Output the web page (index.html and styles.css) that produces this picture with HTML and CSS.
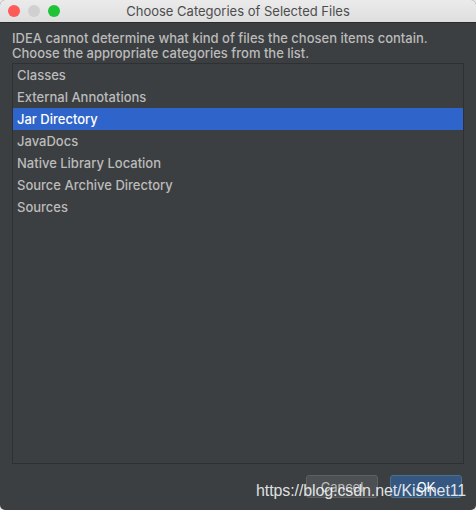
FILE: index.html
```html
<!DOCTYPE html>
<html lang="en">
<head>
  <meta charset="UTF-8" />
  <meta name="viewport" content="width=device-width, initial-scale=1.0"/>
  <title>Choose Categories of Selected Files</title>
  <link rel="stylesheet" href="styles.css">
</head>
<body>

  <div class="window">
    <header class="titlebar">
      <div class="lights">
        <span class="light red"></span>
        <span class="light gray"></span>
        <span class="light green"></span>
      </div>
      <h1>Choose Categories of Selected Files</h1>
    </header>

    <main class="content">
      <p class="message">
        IDEA cannot determine what kind of files the chosen items contain.<br>
        Choose the appropriate categories from the list.
      </p>

      <ul class="list">
        <li>Classes</li>
        <li>External Annotations</li>
        <li class="selected">Jar Directory</li>
        <li>JavaDocs</li>
        <li>Native Library Location</li>
        <li>Source Archive Directory</li>
        <li>Sources</li>
      </ul>

      <div class="buttons">
        <button class="btn">Cancel</button>
        <button class="btn primary">OK</button>
      </div>
    </main>

    <span class="watermark">https://blog.csdn.net/Kismet11</span>
  </div>

</body>
</html>
```

FILE: styles.css
```css
:root {
  --panel: #3c3f41;
  --text: #bbbbbb;
  --border: #2e3031;
  --select: #2f65ca;
  --ok: #365880;
}

body {
  margin: 0;
  background: #ececec;
  font-family: Inter, "Noto Sans", sans-serif;
}

.window {
  position: relative;
  width: 476px;
  height: 510px;
  display: flex;
  flex-direction: column;
  background: var(--panel);
  border-radius: 5px;
  overflow: hidden;
}

.titlebar {
  height: 22px;
  flex-shrink: 0;
  display: flex;
  align-items: center;
  justify-content: center;
  position: relative;
  background: linear-gradient(#ebebeb, #dedede);
  border-bottom: 1px solid #2b2b2b;
}

.titlebar h1 {
  margin: 0;
  font-size: 13px;
  font-weight: normal;
  color: #4d4d4d;
}

.lights {
  position: absolute;
  left: 8px;
  top: 5px;
  display: flex;
  gap: 8px;
}

.light {
  width: 12px;
  height: 12px;
  border-radius: 50%;
}

.red { background: #fc5b57; }
.gray { background: #d0d0d0; }
.green { background: #1ec338; }

.content {
  flex: 1;
  display: flex;
  flex-direction: column;
  padding: 8px 12px 12px 12px;
}

.message {
  margin: 0 0 2px 0;
  font-size: 13px;
  font-weight: 500;
  line-height: 15px;
  color: var(--text);
}

.list {
  list-style: none;
  margin: 0;
  padding: 0;
  height: 399px;
  border: 1px solid var(--border);
  background: var(--panel);
}

.list li {
  height: 22px;
  line-height: 22px;
  padding-left: 4px;
  font-size: 13px;
  font-weight: 500;
  color: var(--text);
}

.list li.selected {
  background: var(--select);
  color: #ffffff;
}

.buttons {
  display: flex;
  justify-content: flex-end;
  gap: 12px;
  margin-top: 11px;
  padding-right: 2px;
}

.btn {
  width: 72px;
  height: 23px;
  border: 1px solid #5e6060;
  border-radius: 3px;
  background: #4c5052;
  color: var(--text);
  font-family: inherit;
  font-size: 13px;
}

.btn.primary {
  background: var(--ok);
  border-color: #4c708c;
  color: #ffffff;
}

.watermark {
  position: absolute;
  left: 256px;
  top: 482px;
  font-family: "Liberation Sans", Arial, sans-serif;
  font-size: 16px;
  letter-spacing: -0.1px;
  color: rgba(255, 255, 255, 0.85);
}
```
